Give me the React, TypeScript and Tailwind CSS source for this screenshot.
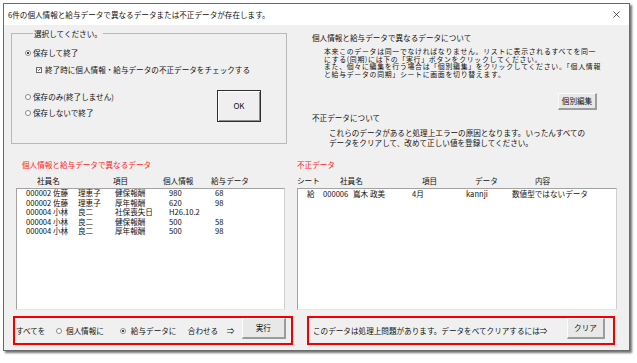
import type { ReactNode } from "react";

type Row = string[];

const LEFT_ROWS: Row[] = [
  ["000002", "佐藤", "理恵子", "健保報酬", "980", "68"],
  ["000002", "佐藤", "理恵子", "厚年報酬", "620", "98"],
  ["000004", "小林", "良二", "社保喪失日", "H26.10.2", ""],
  ["000004", "小林", "良二", "健保報酬", "500", "58"],
  ["000004", "小林", "良二", "厚年報酬", "500", "98"],
];

const RIGHT_ROWS: Row[] = [["給", "000006", "嶌木 政美", "4月", "kannji", "数値型ではないデータ"]];

function Radio({ checked = false }: { checked?: boolean }) {
  return (
    <span className="flex h-[6px] w-[6px] shrink-0 items-center justify-center rounded-full border border-[#8a8a8a] bg-white">
      {checked && <span className="h-[2px] w-[2px] rounded-full bg-black" />}
    </span>
  );
}

function Checkbox() {
  return (
    <span className="flex h-[6px] w-[6px] shrink-0 items-center justify-center border border-[#6a6a6a] bg-white">
      <svg viewBox="0 0 6 6" className="h-[5px] w-[5px]">
        <path d="M0.8 3 L2.4 4.6 L5.2 1.2" fill="none" stroke="#111" strokeWidth="1" />
      </svg>
    </span>
  );
}

function Btn({ children, className = "" }: { children: ReactNode; className?: string }) {
  return (
    <button
      className={`flex shrink-0 items-center justify-center border-t border-l border-r-2 border-b-2 border-t-[#fbfbfb] border-l-[#fbfbfb] border-r-[#9c9c9c] border-b-[#9c9c9c] bg-[#e8e8e8] leading-none ${className}`}
    >
      {children}
    </button>
  );
}

export default function App() {
  return (
    <div className="h-[363px] w-[637px] overflow-hidden bg-white pl-[3px] pt-[3px] font-['Noto_Sans_CJK_JP','Noto_Sans',sans-serif] text-[7.6px] text-[#111]">
      <div className="flex h-[348px] w-[627px] flex-col border border-[#6a6a6a] shadow-[2px_2px_2px_rgba(0,0,0,0.55)]">
        {/* タイトルバー */}
        <div className="flex h-[21px] shrink-0 items-center justify-between bg-white pl-[4px] pr-[9px]">
          <span className="leading-[8px]">6件の個人情報と給与データで異なるデータまたは不正データが存在します。</span>
          <svg viewBox="0 0 8 8" className="h-[7px] w-[7px]">
            <path d="M0.5 0.5 L7.5 7.5 M7.5 0.5 L0.5 7.5" stroke="#333" strokeWidth="0.9" />
          </svg>
        </div>

        <div className="flex flex-1 flex-col bg-[#f0f0f0]">
          {/* 上段 */}
          <div className="flex h-[118px] shrink-0">
            <fieldset className="ml-[7px] mt-[4.5px] h-[114px] w-[276px] shrink-0 border border-[#b9b9b9] pl-[13px] pr-[25px]">
              <legend className="ml-[8px] px-[1px] leading-[7px]">選択してください。</legend>
              <div className="mt-[12px] flex items-center gap-[2px] leading-[8px]">
                <Radio checked />
                <span>保存して終了</span>
              </div>
              <div className="ml-[11px] mt-[9px] flex items-center gap-[3px] leading-[8px]">
                <Checkbox />
                <span>終了時に個人情報・給与データの不正データをチェックする</span>
              </div>
              <div className="mt-[16px] flex">
                <div className="mt-[3px] flex flex-col gap-[8px] leading-[8px]">
                  <div className="flex items-center gap-[2px]">
                    <Radio />
                    <span>保存のみ(終了しません)</span>
                  </div>
                  <div className="flex items-center gap-[2px]">
                    <Radio />
                    <span>保存しないで終了</span>
                  </div>
                </div>
                <button className="ml-auto flex h-[32px] w-[44px] items-center justify-center border border-[#2e2e2e] bg-[#efefef] shadow-[inset_1px_1px_0_#ffffff,inset_-1px_-1px_0_#8c8c8c] text-[8px] leading-none">
                  OK
                </button>
              </div>
            </fieldset>

            <div className="ml-[25px] flex flex-1 flex-col pt-[9px]">
              <p className="leading-[8px]">個人情報と給与データで異なるデータについて</p>
              <div className="ml-[12px] mt-[6px] whitespace-nowrap text-[6.9px] leading-[7.5px] tracking-[0.7px]">
                <p>本来このデータは同一でなければなりません。リストに表示されるすべてを同一</p>
                <p>にする(同期)には下の「実行」ボタンをクリックしてください。</p>
                <p>また、個々に編集を行う場合は「個別編集」をクリックしてください。「個人情報</p>
                <p>と給与データの同期」シートに画面を切り替えます。</p>
              </div>
              <Btn className="ml-[246px] mt-[15px] h-[17px] w-[39px]">個別編集</Btn>
              <p className="mt-[4px] leading-[8px]">不正データについて</p>
              <div className="ml-[17px] mt-[6px] whitespace-nowrap leading-[9.7px]">
                <p>これらのデータがあると処理上エラーの原因となります。いったんすべての</p>
                <p>データをクリアして、改めて正しい値を登録してください。</p>
              </div>
            </div>
          </div>

          {/* 下段 */}
          <div className="mt-[18px] flex">
            {/* 異なるデータ */}
            <div className="ml-[9px] flex w-[280px] shrink-0 flex-col">
              <p className="ml-[9px] leading-[8px] text-[#ff2424]">個人情報と給与データで異なるデータ</p>
              <div className="mt-[8px] grid grid-cols-[76px_50px_48px_1fr] pl-[24px] leading-[8px]">
                <span>社員名</span>
                <span>項目</span>
                <span>個人情報</span>
                <span>給与データ</span>
              </div>
              <div className="ml-[3px] mt-[3px] h-[122px] w-[269px] border border-[#a3a3a3] border-b-[#e6e6e6] border-r-[#cfcfcf] bg-white pl-[9px]">
                <div className="-mt-px">
                  {LEFT_ROWS.map((r, i) => (
                    <div key={i} className="grid grid-cols-[27px_25px_37px_54px_46px_1fr] leading-[9.6px]">
                      {r.map((c, j) => (
                        <span key={j}>{c}</span>
                      ))}
                    </div>
                  ))}
                </div>
              </div>
              <div className="mt-[6px] flex h-[29px] items-start border-2 border-[#f20000] pl-[1px]">
                <div className="flex h-full items-center">
                  <span>すべてを</span>
                  <span className="ml-[10.5px]"><Radio /></span>
                  <span className="ml-[4px]">個人情報に</span>
                  <span className="ml-[16px]"><Radio checked /></span>
                  <span className="ml-[5px]">給与データに</span>
                  <span className="ml-[11.4px]">合わせる</span>
                  <span className="ml-[8.6px]">⇒</span>
                </div>
                <Btn className="ml-[7.4px] h-[21px] w-[44px]">実行</Btn>
              </div>
            </div>

            {/* 不正データ */}
            <div className="ml-[4px] flex w-[320px] shrink-0 flex-col">
              <p className="leading-[8px] text-[#ff2424]">不正データ</p>
              <div className="mt-[8px] grid grid-cols-[43px_82px_53px_60px_1fr] leading-[8px]">
                <span>シート</span>
                <span>社員名</span>
                <span>項目</span>
                <span>データ</span>
                <span>内容</span>
              </div>
              <div className="mt-[3px] h-[122px] border border-[#a3a3a3] border-b-[#e6e6e6] border-r-[#cfcfcf] bg-white pl-[9px]">
                {RIGHT_ROWS.map((r, i) => (
                  <div key={i} className="grid grid-cols-[16px_30px_59px_54px_46px_1fr] leading-[9.6px]">
                    {r.map((c, j) => (
                      <span key={j} className="whitespace-pre">{c}</span>
                    ))}
                  </div>
                ))}
              </div>
              <div className="ml-[10px] mt-[6px] flex h-[29px] w-[308px] items-start border-2 border-[#f20000] pl-[4px] pr-[8px]">
                <span className="flex h-full items-center">このデータは処理上問題があります。データをべてクリアするには⇒</span>
                <Btn className="ml-auto h-[21px] w-[38px]">クリア</Btn>
              </div>
            </div>
          </div>
        </div>
      </div>
    </div>
  );
}
